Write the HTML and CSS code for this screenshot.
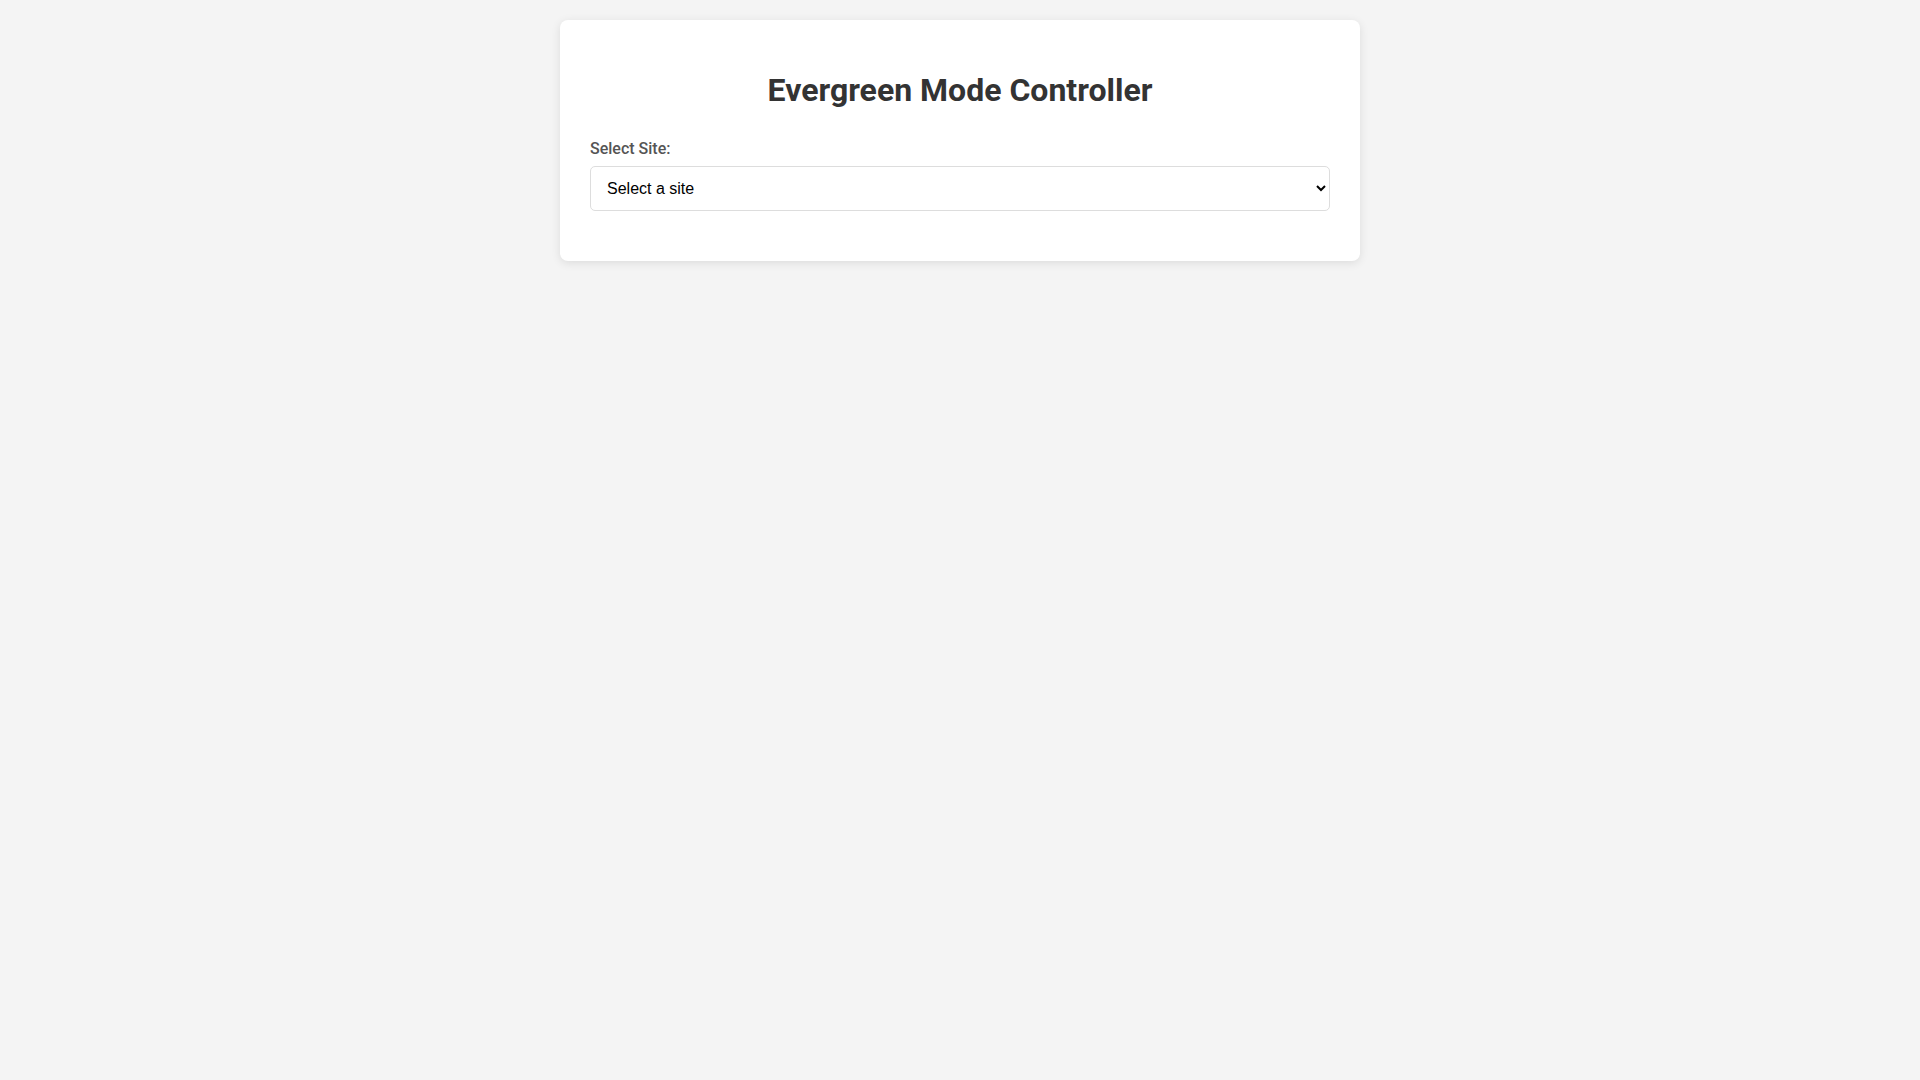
FILE: index.html
```html
<!DOCTYPE html>
<html lang="en">
<head>
<meta charset="utf-8">
<title>Evergreen Mode Controller</title>
<link rel="stylesheet" href="styles.css">
</head>
<body>
<div class="container">
  <h1 class="title">Evergreen Mode Controller</h1>
  <div class="form-group">
    <label class="field-label" for="site">Select Site:</label>
    <select id="site" class="site-select">
      <option value="">Select a site</option>
    </select>
  </div>
</div>
</body>
</html>
```
FILE: styles.css
```css
html, body {
  margin: 0;
  padding: 0;
}
body {
  background: #f4f4f4;
  font-family: Roboto, "Noto Sans", Arial, sans-serif;
  color: #333;
  padding: 20px;
}
.container {
  width: 800px;
  box-sizing: border-box;
  margin: 0 auto;
  background: #fff;
  border-radius: 8px;
  box-shadow: 0 2px 10px rgba(0, 0, 0, 0.1);
  padding: 30px;
}
.title {
  text-align: center;
  font-size: 32px;
  font-weight: 700;
  color: #333;
  margin: 21px 0 30px;
}
.form-group {
  margin-bottom: 20px;
}
.field-label {
  display: block;
  font-size: 16px;
  font-weight: 500;
  color: #555;
  margin-bottom: 8px;
}
.site-select {
  display: block;
  width: 100%;
  box-sizing: border-box;
  padding: 12px;
  font-family: "Liberation Sans", Arial, sans-serif;
  font-size: 16px;
  color: #000;
  background: #fff;
  border: 1px solid #ddd;
  border-radius: 5px;
}
```
